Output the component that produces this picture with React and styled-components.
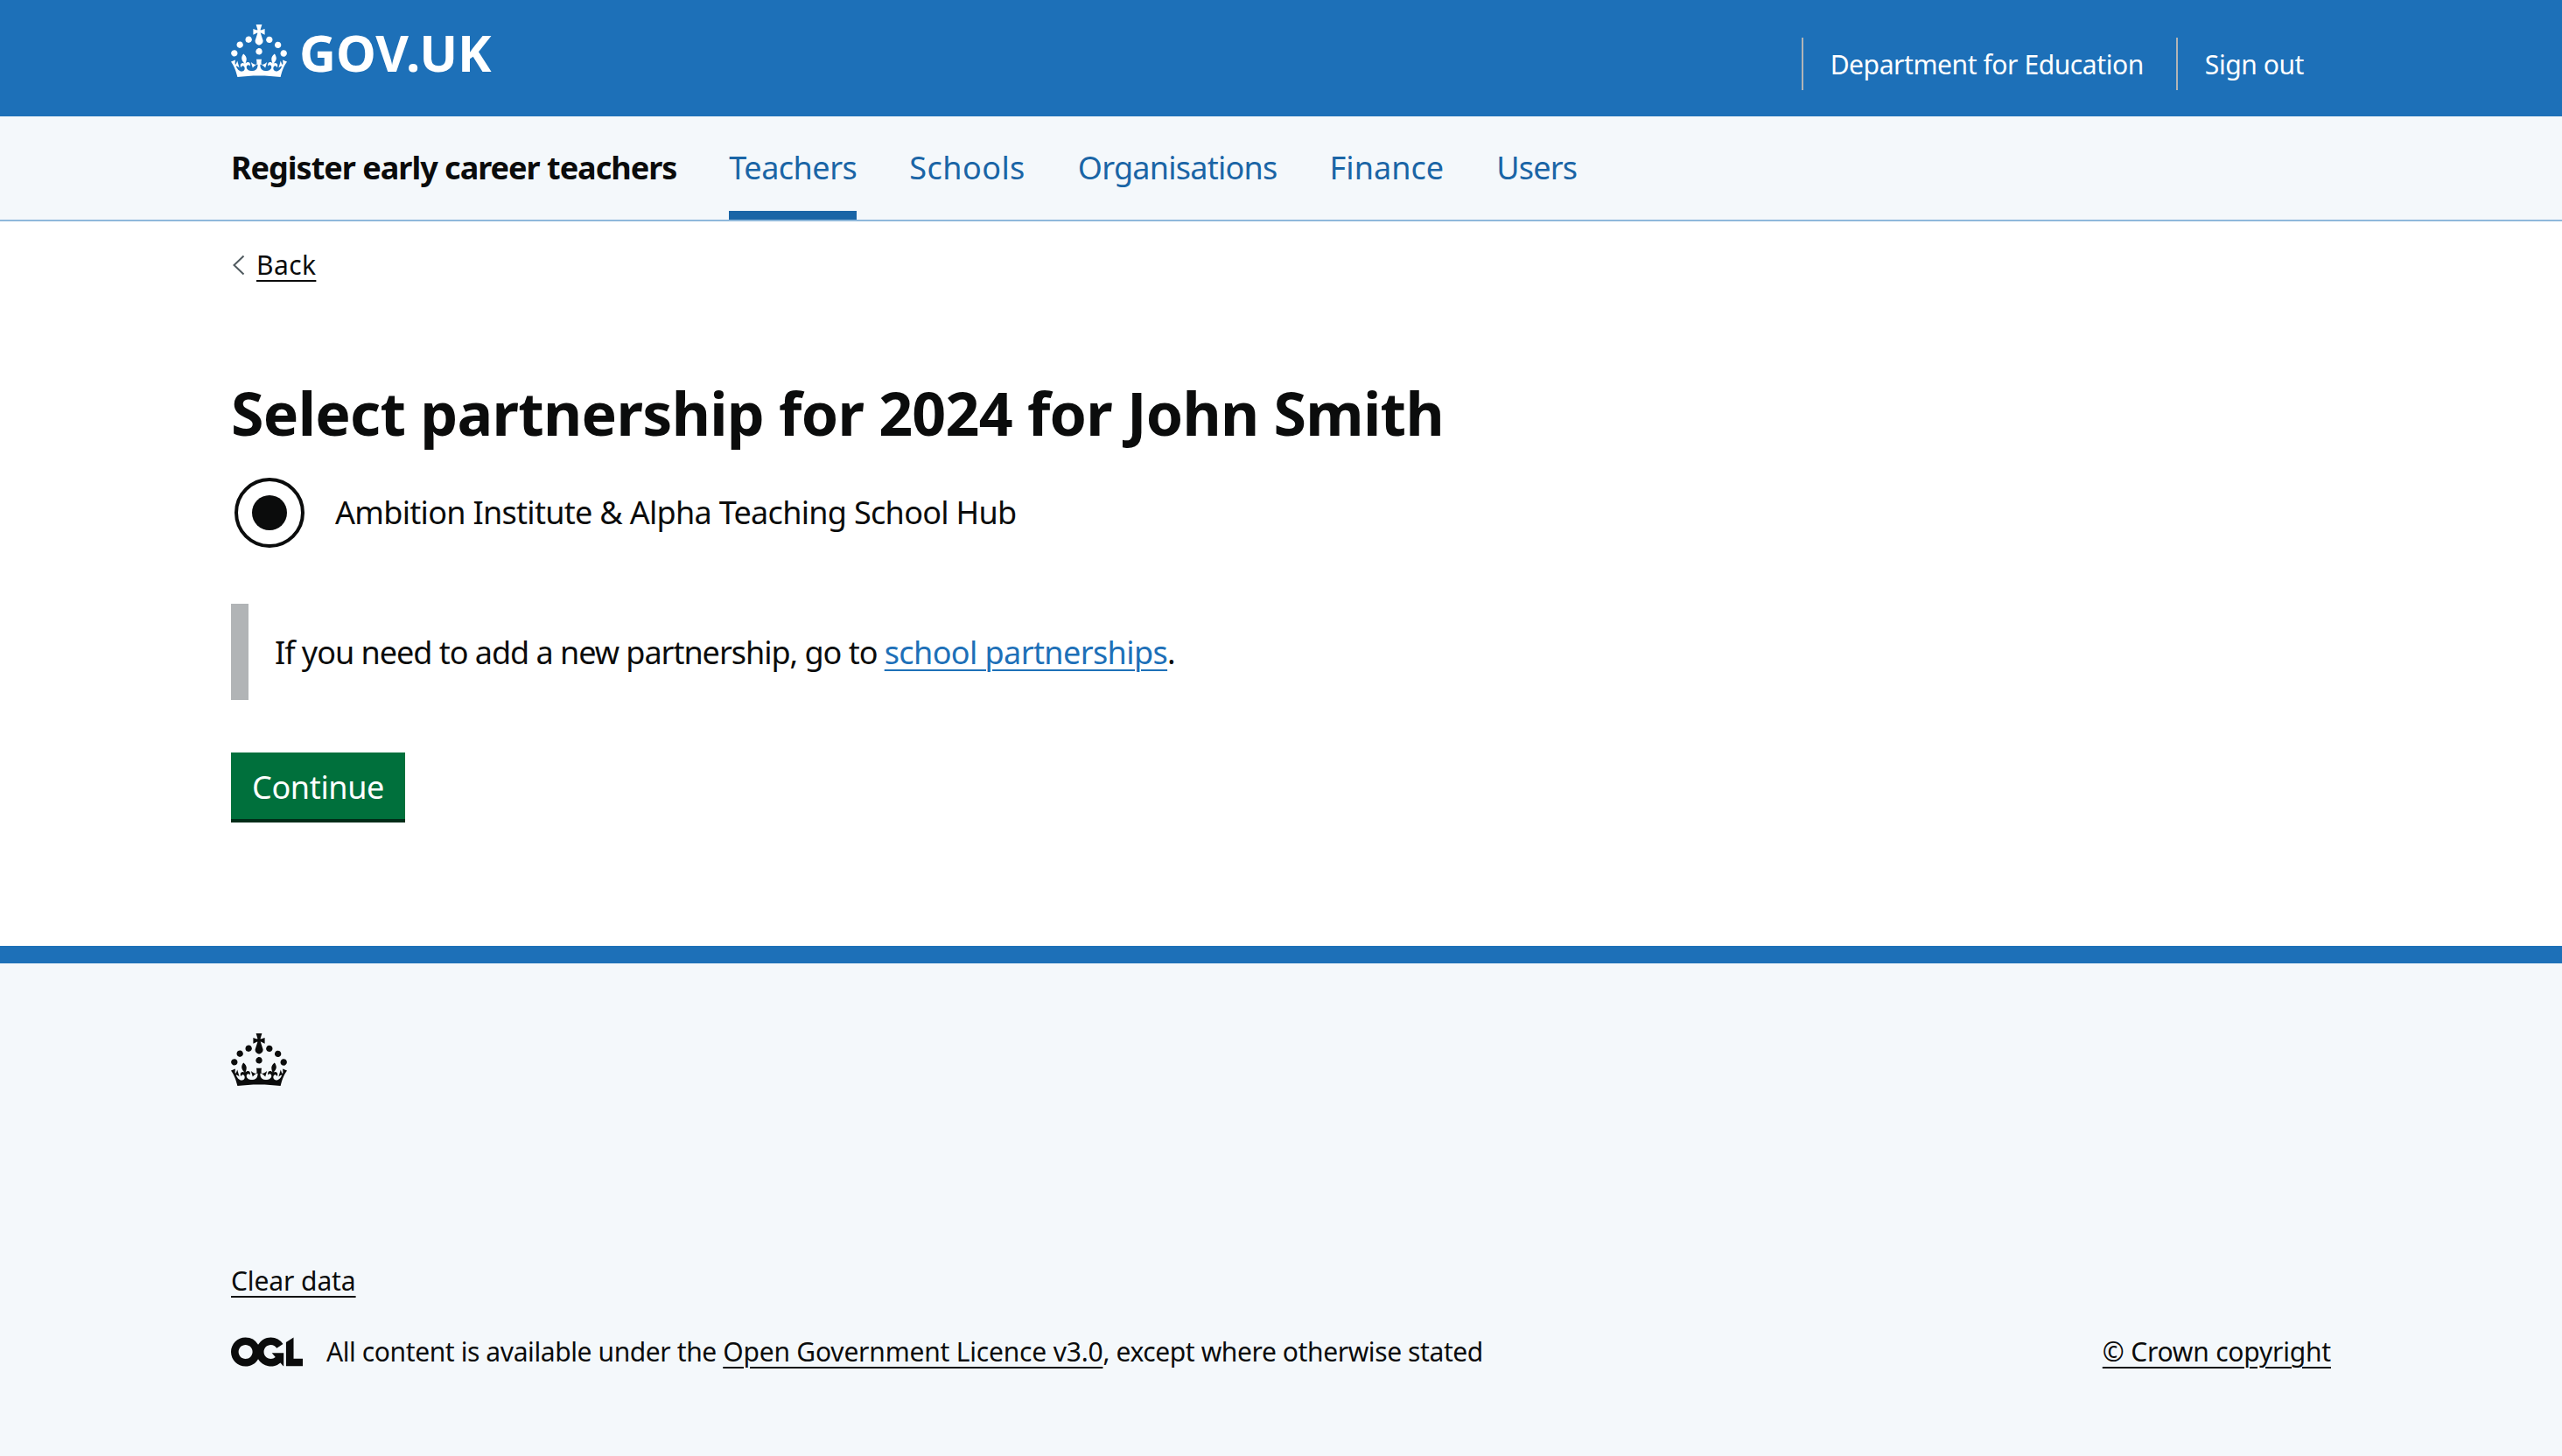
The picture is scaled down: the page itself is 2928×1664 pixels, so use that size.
import styled, { createGlobalStyle } from "styled-components";

const GlobalStyle = createGlobalStyle`
  html, body {
    margin: 0;
    padding: 0;
    background: #fff;
    color: #0b0c0c;
    font-family: "Noto Sans", "Open Sans", Arial, sans-serif;
  }
`;

const CROWN =
  "M22.6 10.4c-1 .4-2-.1-2.4-1-.4-.9.1-2 1-2.4.9-.4 2-.1 2.4 1s-.1 2-1 2.4m-5.9 6.7c-.9.4-2-.1-2.4-1-.4-.9.1-2 1-2.4.9-.4 2-.1 2.4 1s-.1 2-1 2.4m10.8-3.7c-1 .4-2-.1-2.4-1-.4-.9.1-2 1-2.4.9-.4 2-.1 2.4 1s0 2-1 2.4m3.3 4.8c-1 .4-2-.1-2.4-1-.4-.9.1-2 1-2.4.9-.4 2-.1 2.4 1s-.1 2-1 2.4M17 4.7l2.3 1.2V2.5l-2.3.7-.2-.2.9-3h-3.4l.9 3-.2.2c-.1.1-2.3-.7-2.3-.7v3.4L15 4.7c.1.1.1.2.2.2l-1.3 4c-.1.2-.1.4-.1.6 0 1.1.8 2 1.9 2.2h.7c1-.2 1.9-1.1 1.9-2.2 0-.2 0-.4-.1-.6l-1.3-4c-.1-.2 0-.2.1-.3m-7.6 5.7c.9.4 2-.1 2.4-1 .4-.9-.1-2-1-2.4-.9-.4-2-.1-2.4 1s0 2 1 2.4m-5 3c.9.4 2-.1 2.4-1 .4-.9-.1-2-1-2.4-.9-.4-2-.1-2.4 1s.1 2 1 2.4m-3.2 4.8c.9.4 2-.1 2.4-1 .4-1-.1-2-1-2.4-.9-.3-2 .1-2.4 1-.4 1 .1 2 1 2.4M16 29.2c4.4 0 8.6.3 12.3.8 1.1-4.5 2.4-7 3.7-8.8l-2.5-.9c.2 1.3.3 1.9 0 2.7-.4-.4-.8-1.1-1.1-2.3l-1.2 4c.7-.5 1.3-.8 2-.9-1.1 2.5-2.6 3.1-3.5 3-1.1-.2-1.7-1.2-1.5-2.1.3-1.2 1.5-1.5 2.1-.1 1.1-2.3-.8-3-2-2.3 1.9-1.9 2.1-3.5.6-5.6-2.1 1.6-2.1 3.2-1.2 5.5-1.2-1.4-3.2-.6-2.5 1.6.9-1.4 2.1-.5 1.9.8-.2 1.1-1.7 2.1-3.5 1.9-2.7-.2-2.9-2.1-2.9-3.6.7-.1 1.9.5 2.9 1.9l1-3.3c-1.1 1.1-2.1 1.4-3.2 1.4-.3-.9.1-3 .1-3h-3s.4 2.1.1 3c-1.1 0-2.1-.3-3.2-1.4l1 3.3c1-1.4 2.2-2 2.9-1.9-.1 1.5-.2 3.4-2.9 3.6-1.9.2-3.4-.8-3.5-1.9-.2-1.3 1-2.2 1.9-.8.7-2.3-1.2-3-2.5-1.6.9-2.2.9-3.9-1.2-5.5-1.5 2-1.3 3.7.6 5.6-1.2-.7-3.1 0-2 2.3.6-1.4 1.8-1.1 2.1.1.2.9-.3 1.9-1.5 2.1-.9.2-2.4-.5-3.5-3 .6 0 1.2.3 2 .9l-1.2-4c-.3 1.1-.7 1.9-1.1 2.3-.3-.8-.2-1.4 0-2.7l-2.5.9C1.3 23 2.6 25.5 3.7 30c3.7-.5 7.9-.8 12.3-.8";

const Crown = ({ className }) => (
  <svg className={className} viewBox="0 0 32 30" fill="currentColor" aria-hidden="true">
    <path d={CROWN} />
  </svg>
);

const Wrapper = styled.div`
  width: 2400px;
  margin: 0 auto;
`;

const Header = styled.header`
  background: #1d70b8;
  color: #fff;
  height: 133px;
`;

const HeaderInner = styled(Wrapper)`
  display: flex;
  justify-content: space-between;
  height: 100%;
`;

const Logo = styled.a`
  display: flex;
  align-items: center;
  gap: 14px;
  height: 120px;
  color: #fff;
`;

const HeaderCrown = styled(Crown)`
  width: 64px;
  height: 60px;
  margin-bottom: 4px;
`;

const LogoText = styled.span`
  font-size: 58px;
  font-weight: 700;
  line-height: 1;
`;

const HeaderLinks = styled.nav`
  display: flex;
  align-items: flex-start;
  padding-top: 43px;
  padding-right: 31px;
`;

const HeaderLink = styled.a`
  display: block;
  height: 60px;
  line-height: 61px;
  font-size: 30px;
  letter-spacing: -0.42px;
  color: #fff;
  padding: 0 37px 0 31px;
  border-left: 2px solid #b1b4b6;
  &:last-child {
    padding-right: 0;
  }
`;

const ServiceNav = styled.div`
  background: #f4f8fb;
  height: 120px;
  box-sizing: border-box;
  border-bottom: 2px solid #8fb8db;
`;

const ServiceInner = styled(Wrapper)`
  display: flex;
  align-items: stretch;
  height: 100%;
`;

const ServiceName = styled.span`
  font-size: 36px;
  font-weight: 700;
  letter-spacing: -1px;
  line-height: 118px;
  margin-right: 60px;
  color: #0b0c0c;
`;

const NavList = styled.nav`
  display: flex;
  gap: 60px;
`;

const NavItem = styled.a`
  font-size: 36px;
  letter-spacing: ${(p) => p.$tracking}px;
  line-height: 118px;
  color: #1a65a6;
  box-sizing: border-box;
  border-bottom: 10px solid ${(p) => (p.$active ? "#1a65a6" : "transparent")};
`;

const Main = styled(Wrapper)`
  height: 828px;
`;

const BackLink = styled.a`
  display: inline-flex;
  align-items: center;
  gap: 13px;
  margin-top: 32px;
  font-size: 30px;
  letter-spacing: 0.4px;
  line-height: 36px;
  color: #0b0c0c;
`;

const Chevron = styled.svg`
  width: 16px;
  height: 28px;
  color: #505a5f;
`;

const Underlined = styled.span`
  text-decoration: underline;
  text-decoration-thickness: 2px;
  text-underline-offset: 6px;
`;

const Title = styled.h1`
  margin: 110px 0 0;
  font-size: 68px;
  letter-spacing: -0.7px;
  line-height: 80px;
  font-weight: 700;
  color: #0b0c0c;
`;

const RadioRow = styled.label`
  display: flex;
  align-items: center;
  margin-top: 34px;
  padding-left: 4px;
`;

const RadioCircle = styled.span`
  box-sizing: border-box;
  width: 80px;
  height: 80px;
  border: 4px solid #0b0c0c;
  border-radius: 50%;
  display: flex;
  align-items: center;
  justify-content: center;
  &::after {
    content: "";
    width: 40px;
    height: 40px;
    border-radius: 50%;
    background: #0b0c0c;
  }
`;

const RadioLabel = styled.span`
  margin-left: 35px;
  font-size: 36px;
  letter-spacing: -0.7px;
  line-height: 50px;
`;

const Inset = styled.div`
  margin-top: 64px;
  box-sizing: border-box;
  height: 110px;
  border-left: 20px solid #b1b4b6;
  padding-left: 30px;
  display: flex;
  align-items: center;
  font-size: 36px;
  letter-spacing: -1.03px;
  white-space: pre;
`;

const TextLink = styled.a`
  color: #1d70b8;
  letter-spacing: -0.6px;
  text-decoration: underline;
  text-decoration-thickness: 2px;
  text-underline-offset: 6px;
`;

const Button = styled.button`
  display: block;
  margin-top: 60px;
  border: 0;
  padding: 2px 24px 0;
  height: 76px;
  background: #00703c;
  box-shadow: 0 4px 0 #002d18;
  color: #fff;
  font-family: inherit;
  font-size: 36px;
  letter-spacing: -0.35px;
`;

const Footer = styled.footer`
  background: #f4f8fb;
  border-top: 20px solid #1d70b8;
  height: 564px;
`;

const FooterCrown = styled(Crown)`
  display: block;
  width: 64px;
  height: 60px;
  margin-top: 80px;
  color: #0b0c0c;
`;

const ClearLink = styled.a`
  display: block;
  margin-top: 203px;
  font-size: 30px;
  letter-spacing: -0.1px;
  line-height: 40px;
  color: #0b0c0c;
`;

const MetaRow = styled.div`
  display: flex;
  align-items: center;
  justify-content: space-between;
  margin-top: 41px;
  font-size: 30px;
  line-height: 40px;
  letter-spacing: -0.4px;
  white-space: pre;
`;

const MetaLeft = styled.div`
  display: flex;
  align-items: center;
  gap: 27px;
`;

const OglLogo = styled.svg`
  width: 82px;
  height: 34px;
  color: #0b0c0c;
`;

const FootLink = styled.a`
  color: #0b0c0c;
  letter-spacing: -0.2px;
`;

const navItems = [
  { label: "Teachers", tracking: -0.5, active: true },
  { label: "Schools", tracking: 0.45 },
  { label: "Organisations", tracking: -0.75 },
  { label: "Finance", tracking: 0.05 },
  { label: "Users", tracking: -0.8 },
];

export default function App() {
  return (
    <>
      <GlobalStyle />
      <Header>
        <HeaderInner>
          <Logo>
            <HeaderCrown />
            <LogoText>GOV.UK</LogoText>
          </Logo>
          <HeaderLinks>
            <HeaderLink>Department for Education</HeaderLink>
            <HeaderLink>Sign out</HeaderLink>
          </HeaderLinks>
        </HeaderInner>
      </Header>
      <ServiceNav>
        <ServiceInner>
          <ServiceName>Register early career teachers</ServiceName>
          <NavList>
            {navItems.map((item) => (
              <NavItem key={item.label} $active={item.active} $tracking={item.tracking}>
                {item.label}
              </NavItem>
            ))}
          </NavList>
        </ServiceInner>
      </ServiceNav>
      <Main>
        <BackLink>
          <Chevron viewBox="0 0 16 28" fill="none" stroke="currentColor" strokeWidth="2">
            <path d="M14.5 3.5 3.5 14l11 10.5" />
          </Chevron>
          <Underlined>Back</Underlined>
        </BackLink>
        <Title>Select partnership for 2024 for John Smith</Title>
        <RadioRow>
          <RadioCircle />
          <RadioLabel>Ambition Institute &amp; Alpha Teaching School Hub</RadioLabel>
        </RadioRow>
        <Inset>
          If you need to add a new partnership, go to <TextLink>school partnerships</TextLink>.
        </Inset>
        <Button>Continue</Button>
      </Main>
      <Footer>
        <Wrapper>
          <FooterCrown />
          <ClearLink>
            <Underlined>Clear data</Underlined>
          </ClearLink>
          <MetaRow>
            <MetaLeft>
              <OglLogo viewBox="0 0 483.2 195.7" fill="currentColor">
                <path d="M421.5 142.8V.1l-50.7 32.3v161.1h112.4v-50.7zm-122.3-9.6A47.12 47.12 0 0 1 221 97.8c0-26 21.1-47.1 47.1-47.1 16.7 0 31.4 8.7 39.7 21.8l42.7-27.2A97.63 97.63 0 0 0 268.1 0c-36.5 0-68.3 20.1-85.1 49.7A98 98 0 0 0 97.8 0C43.9 0 0 43.9 0 97.8s43.9 97.8 97.8 97.8c36.5 0 68.3-20.1 85.1-49.7a97.76 97.76 0 0 0 149.6 25.4l19.4 22.2h3v-87.8h-80l24.3 27.5zM97.8 145c-26 0-47.1-21.1-47.1-47.1s21.1-47.1 47.1-47.1 47.2 21 47.2 47S123.8 145 97.8 145" />
              </OglLogo>
              <span>
                All content is available under the{" "}
                <FootLink>
                  <Underlined>Open Government Licence v3.0</Underlined>
                </FootLink>
                , except where otherwise stated
              </span>
            </MetaLeft>
            <FootLink>
              <Underlined>© Crown copyright</Underlined>
            </FootLink>
          </MetaRow>
        </Wrapper>
      </Footer>
    </>
  );
}
